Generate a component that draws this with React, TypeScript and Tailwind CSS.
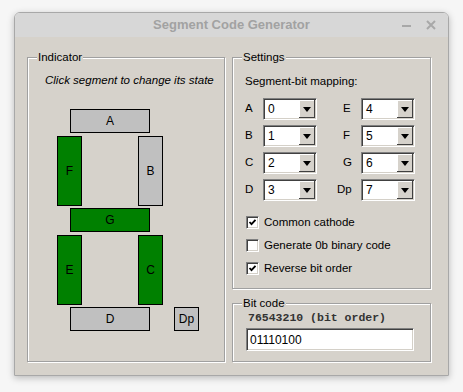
import React from "react";

const BODY = "bg-[#d6d2cb]";

function Group({
  label,
  className,
  children,
}: {
  label: string;
  className: string;
  children?: React.ReactNode;
}) {
  return (
    <div
      className={`relative border border-[#a0a0a0] shadow-[inset_1px_1px_0_#ffffff,1px_1px_0_#ffffff] ${className}`}
    >
      <span className={`absolute left-[9px] top-[-8px] px-[1px] ${BODY} text-[11.5px] leading-[14px] text-black`}>
        {label}
      </span>
      {children}
    </div>
  );
}

function Seg({
  label,
  on,
  className,
}: {
  label: string;
  on: boolean;
  className: string;
}) {
  return (
    <div
      className={`flex shrink-0 items-center justify-center border border-black text-[12px] text-black ${
        on ? "bg-[#008000]" : "bg-[#c0c0c0]"
      } ${className}`}
    >
      {label}
    </div>
  );
}

function Select({ value }: { value: string }) {
  return (
    <div className="flex h-[22px] w-[54px] border border-t-[#808080] border-l-[#808080] border-b-white border-r-white bg-white shadow-[inset_1px_1px_0_#404040,inset_-1px_-1px_0_#d4d0c8] p-[1px]">
      <div className="flex-1 pl-[3px] text-[12px] leading-[18px] text-black">{value}</div>
      <div className="flex h-[18px] w-[16px] items-center justify-center bg-[#d6d2cb] shadow-[inset_-1px_-1px_0_#404040,inset_1px_1px_0_#ffffff]">
        <svg width="8" height="5" viewBox="0 0 8 5">
          <path d="M0 0 H8 L4 5 Z" fill="#000" />
        </svg>
      </div>
    </div>
  );
}

function Check({ checked, label }: { checked: boolean; label: string }) {
  return (
    <div className="flex h-[23px] items-center">
      <div className="flex h-[13px] w-[13px] items-center justify-center border border-t-[#808080] border-l-[#808080] border-b-white border-r-white bg-white shadow-[inset_1px_1px_0_#404040,inset_-1px_-1px_0_#d4d0c8]">
        {checked && (
          <svg width="9" height="9" viewBox="0 0 9 9">
            <path d="M1.5 4 L3.5 6.2 L7.5 1.8" stroke="#000" strokeWidth="1.8" fill="none" />
          </svg>
        )}
      </div>
      <span className="ml-[5px] text-[11.5px] text-black">{label}</span>
    </div>
  );
}

export default function App() {
  const rows: [string, string, string, string][] = [
    ["A", "0", "E", "4"],
    ["B", "1", "F", "5"],
    ["C", "2", "G", "6"],
    ["D", "3", "Dp", "7"],
  ];
  return (
    <div
      className="min-h-screen bg-[#f6f6f6] pl-[14px] pt-[12px]"
      style={{ fontFamily: '"Liberation Sans", Arial, sans-serif' }}
    >
      <div className="flex h-[364px] w-[435px] flex-col overflow-hidden rounded-t-[6px] border border-[#a8a8a8] shadow-[0_2px_7px_rgba(0,0,0,0.25)]">
        {/* Title bar */}
        <div className="relative flex h-[24px] items-center justify-center bg-[#d7d7d7]">
          <span className="text-[13px] font-bold text-[#a2a2a2]">Segment Code Generator</span>
          <div className="absolute right-[12px] top-0 flex h-full items-center gap-[15px]">
            <div className="mt-[2px] h-[2px] w-[9px] bg-[#a8a8a8]" />
            <svg width="10" height="10" viewBox="0 0 10 10">
              <path d="M1 1 L9 9 M9 1 L1 9" stroke="#a8a8a8" strokeWidth="2" />
            </svg>
          </div>
        </div>
        {/* Body */}
        <div className={`flex flex-1 gap-[7px] ${BODY} pl-[12px] pt-[20px]`}>
          <Group label="Indicator" className="h-[305px] w-[198px]">
            <div className="ml-[17px] mt-[15px] text-[11.5px] italic leading-[14px] text-black">
              Click segment to change its state
            </div>
            <div className="ml-[29px] mt-[22px] flex w-[150px] flex-col">
              <Seg label="A" on={false} className="ml-[13px] h-[24px] w-[80px]" />
              <div className="mt-[3px] flex w-[106px] justify-between">
                <Seg label="F" on={true} className="h-[70px] w-[25px]" />
                <Seg label="B" on={false} className="h-[70px] w-[25px]" />
              </div>
              <Seg label="G" on={true} className="ml-[13px] mt-[2px] h-[24px] w-[80px]" />
              <div className="mt-[3px] flex w-[106px] justify-between">
                <Seg label="E" on={true} className="h-[70px] w-[25px]" />
                <Seg label="C" on={true} className="h-[70px] w-[25px]" />
              </div>
              <div className="mt-[2px] flex">
                <Seg label="D" on={false} className="ml-[13px] h-[24px] w-[80px]" />
                <Seg label="Dp" on={false} className="ml-[24px] h-[24px] w-[25px]" />
              </div>
            </div>
          </Group>
          <div className="flex flex-col gap-[14px]">
            <Group label="Settings" className="h-[232px] w-[199px]">
              <div className="ml-[12px] mt-[16px] text-[11.5px] leading-[14px] text-black">
                Segment-bit mapping:
              </div>
              <div className="ml-[12px] mt-[10px] flex flex-col gap-[5px]">
                {rows.map(([l1, v1, l2, v2]) => (
                  <div key={l1} className="flex items-center text-[11.5px] text-black">
                    <span className="w-[18px]">{l1}</span>
                    <Select value={v1} />
                    <span className={`ml-[20px] w-[24px] ${l2 === "Dp" ? "" : "pl-[6px]"}`}>{l2}</span>
                    <Select value={v2} />
                  </div>
                ))}
              </div>
              <div className="ml-[13px] mt-[10px] flex flex-col">
                <Check checked={true} label="Common cathode" />
                <Check checked={false} label="Generate 0b binary code" />
                <Check checked={true} label="Reverse bit order" />
              </div>
            </Group>
            <Group label="Bit code" className="h-[59px] w-[199px]">
              <div
                className="ml-[15px] mt-[7px] text-[11.5px] font-bold leading-[14px] text-[#333]"
                style={{ fontFamily: '"Liberation Mono", "Courier New", monospace' }}
              >
                76543210 (bit order)
              </div>
              <div className="ml-[13px] mt-[3px] flex h-[23px] w-[168px] items-center border border-t-[#808080] border-l-[#808080] border-b-white border-r-white bg-white pl-[3px] text-[12px] text-black shadow-[inset_1px_1px_0_#404040,inset_-1px_-1px_0_#d4d0c8]">
                01110100
              </div>
            </Group>
          </div>
        </div>
      </div>
    </div>
  );
}
